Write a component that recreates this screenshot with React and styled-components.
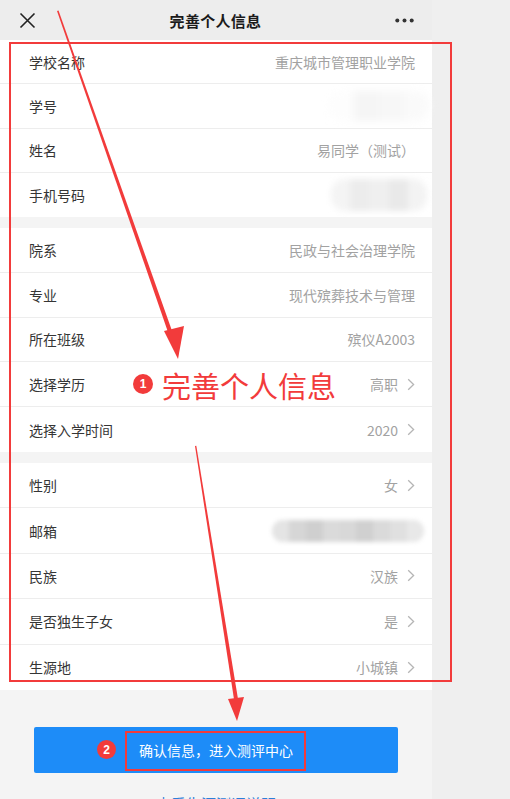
import React from 'react'
import styled, { createGlobalStyle } from 'styled-components'

const Global = createGlobalStyle`
  html, body {
    margin: 0;
    padding: 0;
    background: #efefef;
    font-family: "Noto Sans CJK SC", "Noto Sans", sans-serif;
  }
`

const Screen = styled.div`
  position: relative;
  width: 510px;
  height: 799px;
  overflow: hidden;
  background: #efefef;
`
const Phone = styled.div`
  width: 432px;
  height: 799px;
  background: #f4f4f4;
  display: flex;
  flex-direction: column;
`
const NavBar = styled.div`
  height: 40px;
  flex-shrink: 0;
  background: #ededed;
  display: flex;
  align-items: center;
  justify-content: space-between;
  padding: 0 18px 0 19px;
`
const NavTitle = styled.div`
  font-size: 15px;
  font-weight: 700;
  color: #1b1b1b;
  letter-spacing: 0.3px;
`
const Section = styled.div`
  background: #fff;
  margin-bottom: ${p => p.gap || 0}px;
`
const Row = styled.div`
  height: ${p => p.h}px;
  box-sizing: border-box;
  display: flex;
  align-items: center;
  justify-content: space-between;
  padding: 0 17px 0 29px;
  border-bottom: 1px solid #ededed;
  &:last-child {
    border-bottom: none;
  }
`
const Label = styled.span`
  font-size: 14px;
  color: #353535;
`
const Value = styled.span`
  display: flex;
  align-items: center;
  gap: 9px;
  font-size: 14px;
  color: #a2a2a2;
`
const Blur = styled.div`
  display: flex;
  width: ${p => p.w}px;
  height: ${p => p.h}px;
  margin-right: ${p => p.mr || 0}px;
  filter: blur(${p => p.r}px);
  border-radius: 14px;
  background: ${p => p.base};
  overflow: hidden;
`
const Cell = styled.div`
  flex: 1;
  background: ${p => p.c};
`
const Footer = styled.div`
  flex: 1;
  display: flex;
  flex-direction: column;
  align-items: center;
  padding-top: 37px;
`
const Button = styled.div`
  width: 364px;
  height: 46px;
  background: #1d8cf8;
  border-radius: 2px;
  color: #fff;
  font-size: 14px;
  display: flex;
  align-items: center;
  justify-content: center;
`
const Link = styled.div`
  margin-top: 20px;
  font-size: 15px;
  color: #2d7fd8;
`

const Overlay = styled.svg`
  position: absolute;
  left: 0;
  top: 0;
  pointer-events: none;
`
const Frame = styled.div`
  position: absolute;
  left: ${p => p.x}px;
  top: ${p => p.y}px;
  width: ${p => p.w}px;
  height: ${p => p.h}px;
  border: ${p => p.b}px solid #f23b3b;
  box-sizing: border-box;
`
const Badge = styled.div`
  position: absolute;
  left: ${p => p.x}px;
  top: ${p => p.y}px;
  width: ${p => p.d}px;
  height: ${p => p.d}px;
  border-radius: 50%;
  background: #f23b3b;
  color: #fff;
  font-family: "Liberation Sans", sans-serif;
  font-size: 12px;
  font-weight: 700;
  display: flex;
  align-items: center;
  justify-content: center;
`
const Note = styled.div`
  position: absolute;
  left: 162px;
  top: 367px;
  font-size: 29px;
  line-height: 36px;
  color: #f23b3b;
`

const Chevron = () => (
  <svg width="8" height="13" viewBox="0 0 8 13">
    <path d="M1.2 1.2 L6.6 6.5 L1.2 11.8" fill="none" stroke="#b5b5b5" strokeWidth="1.3" />
  </svg>
)

const sections = [
  {
    h: 44.25,
    rows: [
      { label: '学校名称', value: '重庆城市管理职业学院' },
      { label: '学号', blur: { w: 100, h: 30, mr: -14, r: 4, base: '#f8f8f8', cells: ['#fdfdfd', '#f5f5f5', '#f7f7f7', '#fafafa'] } },
      { label: '姓名', value: '易同学（测试）' },
      { label: '手机号码', blur: { w: 96, h: 32, mr: -12, r: 3, base: '#f3f3f3', cells: ['#f4f4f4', '#ececec', '#efefef', '#e9e9e9', '#f3f3f3'] } },
    ],
  },
  {
    h: 44.8,
    rows: [
      { label: '院系', value: '民政与社会治理学院' },
      { label: '专业', value: '现代殡葬技术与管理' },
      { label: '所在班级', value: '殡仪A2003' },
      { label: '选择学历', value: '高职', arrow: true },
      { label: '选择入学时间', value: '2020', arrow: true },
    ],
  },
  {
    h: 45.4,
    rows: [
      { label: '性别', value: '女', arrow: true },
      { label: '邮箱', blur: { w: 152, h: 22, mr: -9, r: 2, base: '#ececec', cells: ['#e4e4e4', '#d6d6d6', '#cfcfcf', '#dadada', '#d8d8d8', '#d0d0d0', '#dadada', '#e0e0e0', '#e8e8e8'] } },
      { label: '民族', value: '汉族', arrow: true },
      { label: '是否独生子女', value: '是', arrow: true },
      { label: '生源地', value: '小城镇', arrow: true },
    ],
  },
]

const App = () => {
  return (
    <Screen>
      <Global />
      <Phone>
        <NavBar>
          <svg width="17" height="17" viewBox="0 0 17 17">
            <path d="M1.5 1.5 L15.5 15.5 M15.5 1.5 L1.5 15.5" stroke="#222" strokeWidth="1.6" />
          </svg>
          <NavTitle>完善个人信息</NavTitle>
          <svg width="19" height="5" viewBox="0 0 19 5">
            <circle cx="2.3" cy="2.5" r="2" fill="#333" />
            <circle cx="9.5" cy="2.5" r="2" fill="#333" />
            <circle cx="16.7" cy="2.5" r="2" fill="#333" />
          </svg>
        </NavBar>

        {sections.map((s, i) => (
          <Section key={i} gap={i < 2 ? 11 : 0}>
            {s.rows.map(r => (
              <Row key={r.label} h={s.h}>
                <Label>{r.label}</Label>
                {r.blur ? (
                  <Blur w={r.blur.w} h={r.blur.h} mr={r.blur.mr} r={r.blur.r} base={r.blur.base}>
                    {r.blur.cells.map((c, k) => <Cell key={k} c={c} />)}
                  </Blur>
                ) : (
                  <Value>
                    {r.value}
                    {r.arrow && <Chevron />}
                  </Value>
                )}
              </Row>
            ))}
          </Section>
        ))}

        <Footer>
          <Button>确认信息，进入测评中心</Button>
          <Link>查看生涯测评说明</Link>
        </Footer>
      </Phone>

      <Frame x={9} y={42} w={443} h={640} b={2.5} />
      <Frame x={125} y={731} w={181} h={40} b={2} />

      <Overlay width="510" height="799" viewBox="0 0 510 799">
        <polygon points="57,11 58.5,10.6 173.5,335 169.5,336.5" fill="#f23b3b" />
        <polygon points="164,331 184,326 178,359" fill="#f23b3b" />
        <polygon points="195,446 196.3,445.8 238.5,702 234.5,702.6" fill="#f23b3b" />
        <polygon points="228,699 244,697 237,721" fill="#f23b3b" />
      </Overlay>

      <Badge x={133} y={374} d={20}>1</Badge>
      <Note>完善个人信息</Note>
      <Badge x={97} y={740} d={19}>2</Badge>
    </Screen>
  )
}

export default App
